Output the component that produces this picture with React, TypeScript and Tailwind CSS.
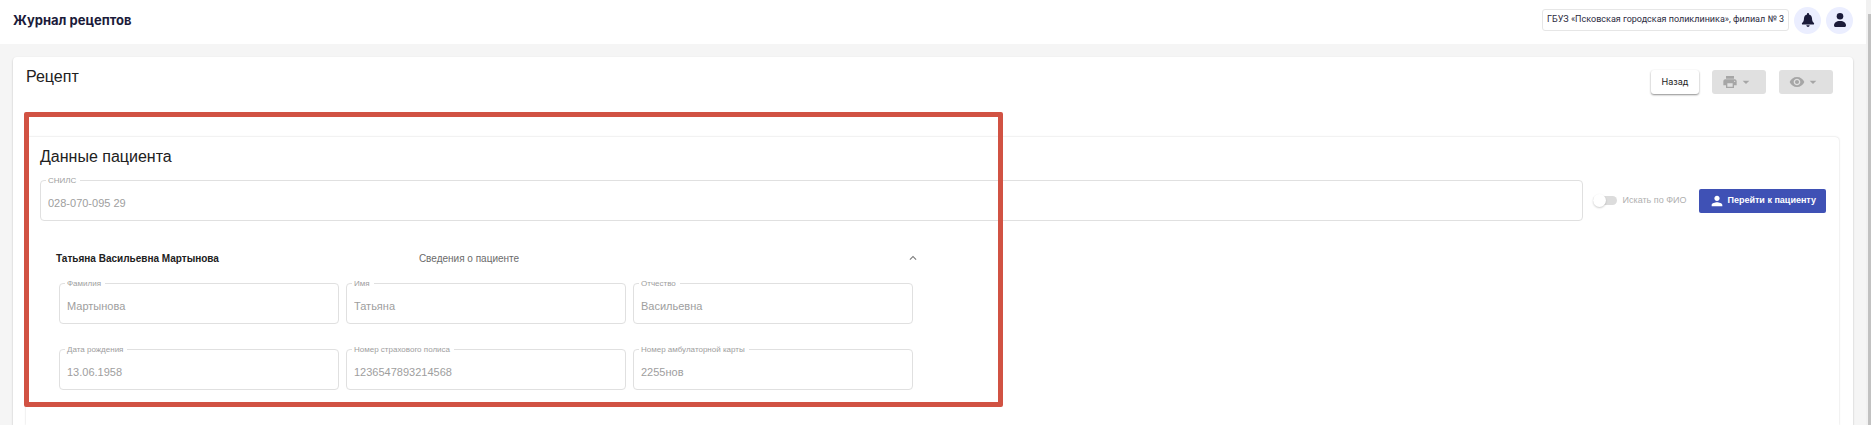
import React, { useState } from "react";
import { MdPrint, MdVisibility, MdPerson, MdArrowDropDown, MdKeyboardArrowUp } from "react-icons/md";

interface FieldProps {
  id: string;
  label: string;
  value: string;
  className?: string;
}

const Field = ({ id, label, value, className = "" }: FieldProps) => (
  <div className={`relative ${className}`}>
    <label
      htmlFor={id}
      className="absolute left-[6px] -top-1 px-[2px] pr-1 bg-white text-[8px] leading-[10px] text-[#9e9e9e] whitespace-nowrap"
    >
      {label}
    </label>
    <input
      id={id}
      value={value}
      disabled
      className="block w-full h-[41px] px-[7px] pt-1 rounded-[4px] border border-[#e0e0e0] bg-transparent text-[11px] text-[#9e9e9e]"
    />
  </div>
);

const BellIcon = () => (
  <svg viewBox="0 0 14 14" className="w-[14px] h-[14px]" fill="#1b1b3a">
    <path d="M7 0C6.400 0 6 .4 6 1v.4C4.200 1.800 3.100 3.300 3 5.200 2.900 7.700 2.500 8.600 1.300 9.700c-.8.8-.4 1.800.6 1.800h10.200c1 0 1.400-1 .6-1.800C11.500 8.600 11.100 7.700 11 5.200c-.1-1.900-1.200-3.400-3-3.800V1c0-.6-.4-1-1-1z" />
    <path d="M5.300 12.300h3.400C8.500 13.300 7.800 14 7 14s-1.500-.7-1.700-1.700z" />
  </svg>
);

const UserIcon = () => (
  <svg viewBox="0 0 14 14" className="w-[14px] h-[14px]" fill="#1b1b3a">
    <circle cx="7" cy="3.300" r="3.300" />
    <path d="M1 12.500C1 9.800 3.200 8 7 8s6 1.800 6 4.500c0 .9-.6 1.500-1.500 1.500h-9C1.600 14 1 13.400 1 12.500z" />
  </svg>
);

const patientFields = [
  { id: "surname", label: "Фамилия", value: "Мартынова" },
  { id: "name", label: "Имя", value: "Татьяна" },
  { id: "patronymic", label: "Отчество", value: "Васильевна" },
  { id: "birthday", label: "Дата рождения", value: "13.06.1958" },
  { id: "policy", label: "Номер страхового полиса", value: "1236547893214568" },
  { id: "card", label: "Номер амбулаторной карты", value: "2255нов" },
];

const Header = () => (
  <header className="h-11 flex items-center justify-between px-[13px] pb-1 bg-white">
    <h1 className="font-['Inter',sans-serif] text-[13px] leading-4 font-bold text-[#1b1b3a]">Журнал рецептов</h1>
    <div className="flex items-center gap-[5px]">
      <div className="h-[22px] flex items-center px-1 rounded-[3px] border border-[#e6e6e6] font-['Roboto',sans-serif] text-[9px] text-[#2b2b40] whitespace-nowrap">
        ГБУЗ «Псковская городская поликлиника», филиал № 3
      </div>
      <button aria-label="Уведомления" className="w-[27px] h-[27px] flex items-center justify-center rounded-full bg-[#ebeeff]">
        <BellIcon />
      </button>
      <button aria-label="Профиль" className="w-[27px] h-[27px] flex items-center justify-center rounded-full bg-[#ebeeff]">
        <UserIcon />
      </button>
    </div>
  </header>
);

const PatientData = () => {
  const [open, setOpen] = useState(true);

  return (
    <section className="relative flex-1 ml-[13px] mr-[14px] pl-[14px] pr-[13px] pt-[10px] rounded-t-[4px] bg-white shadow-[0_0_2px_rgba(0,0,0,0.2)]">
      <h3 className="text-[16px] leading-5 text-[#212121]">Данные пациента</h3>
      <div className="flex items-center mt-[13px]">
        <Field id="snils" label="СНИЛС" value="028-070-095 29" className="flex-1" />
        <label className="flex items-center ml-[10px] text-[9px] text-[#b0b0b0]">
          <input
            type="checkbox"
            disabled
            className="appearance-none relative w-6 h-[9px] mr-[6px] rounded-full bg-[#dcdcdc] before:absolute before:left-0 before:-top-[2px] before:w-[13px] before:h-[13px] before:rounded-full before:bg-white before:shadow-[0_1px_2px_rgba(0,0,0,0.2)]"
          />
          Искать по ФИО
        </label>
        <button className="h-6 flex items-center gap-[2px] ml-[13px] px-[10px] rounded-[2px] bg-[#3f51b5] text-[9px] font-bold text-white whitespace-nowrap">
          <MdPerson className="w-4 h-4" />
          Перейти к пациенту
        </button>
      </div>

      <div className="w-1/2 mt-[27px]">
        <button
          onClick={() => setOpen(!open)}
          className="w-full h-5 flex items-center pl-4 pr-[13px] text-left text-[10px]"
        >
          <span className="w-[42%] font-bold text-[#212121]">Татьяна Васильевна Мартынова</span>
          <span className="flex-1 text-[#6b6b6b]">Сведения о пациенте</span>
          <MdKeyboardArrowUp className="w-[14px] h-[14px] text-[#7a7a7a]" />
        </button>
        {open && (
          <div className="grid grid-cols-3 gap-x-[7px] gap-y-[25px] pl-[19px] pr-5 mt-[15px]">
            {patientFields.map((field) => (
              <Field key={field.id} {...field} />
            ))}
          </div>
        )}
      </div>

      {/* Highlight frame */}
      <div className="absolute -left-[2px] -top-[25px] w-[54%] h-[295px] rounded-[2px] border-[5px] border-[#d15243] pointer-events-none" />
    </section>
  );
};

const App = () => (
  <div className="min-h-screen flex bg-[#f5f5f5] font-['Liberation_Sans',Arial,sans-serif]">
    <div className="flex-1 flex flex-col">
      <Header />
      <main className="flex-1 flex flex-col mt-[13px] mx-[13px] rounded-t-[4px] bg-white shadow-[0_1px_2px_rgba(0,0,0,0.25)]">
        <div className="h-20 flex items-start justify-between pl-[13px] pr-5">
          <h2 className="mt-[10px] text-[16px] leading-5 text-[#212121]">Рецепт</h2>
          <div className="flex gap-[13px] mt-[13px]">
            <button className="w-12 h-6 rounded-[3px] bg-white font-['Inter',sans-serif] text-[9px] text-[#212121] shadow-[0_1px_2px_rgba(0,0,0,0.45)]">
              Назад
            </button>
            <button disabled aria-label="Печать" className="w-[54px] h-6 flex items-center pl-[10px] rounded-[3px] bg-[#e0e0e0] text-[#a6a6a6]">
              <MdPrint className="w-4 h-4" />
              <MdArrowDropDown className="w-4 h-4" />
            </button>
            <button disabled aria-label="Просмотр" className="w-[54px] h-6 flex items-center pl-[10px] rounded-[3px] bg-[#e0e0e0] text-[#a6a6a6]">
              <MdVisibility className="w-4 h-4" />
              <MdArrowDropDown className="w-4 h-4" />
            </button>
          </div>
        </div>
        <PatientData />
      </main>
    </div>
    {/* Scroll track */}
    <div className="w-[5px] flex pt-[14px] pl-[2px] bg-[#f1f1f1]">
      <div className="flex-1 bg-[#c1c1c1]" />
    </div>
  </div>
);

export default App;
